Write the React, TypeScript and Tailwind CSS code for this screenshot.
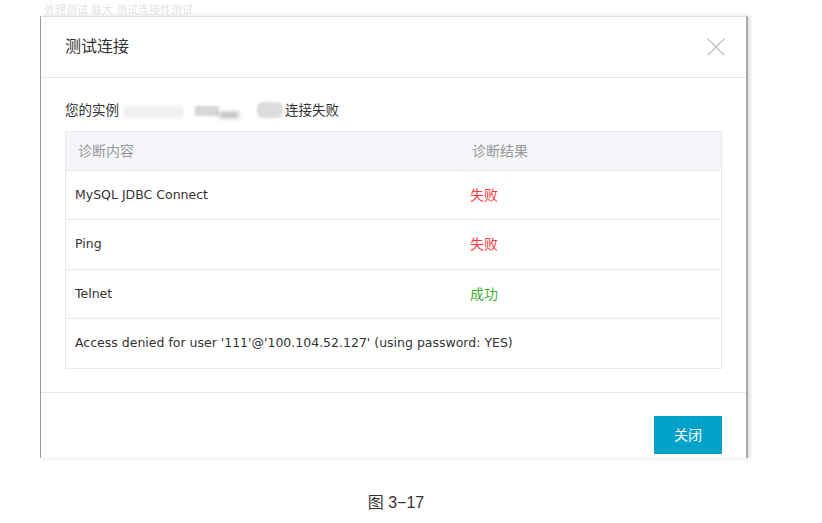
import { X } from "lucide-react";

const rows = [
  { name: "MySQL JDBC Connect", result: "失败", ok: false, h: "h-[49px]" },
  { name: "Ping", result: "失败", ok: false, h: "h-[50px]" },
  { name: "Telnet", result: "成功", ok: true, h: "h-[49px]" },
];

const font = "font-['Liberation_Sans','Noto_Sans_CJK_SC',sans-serif]";
const latin = "font-['DejaVu_Sans','Noto_Sans_CJK_SC',sans-serif] text-[12.5px]";

const App = () => {
  return (
    <div className={`w-[822px] h-[523px] bg-white ${font} text-[#333] overflow-hidden`}>
      <div className="h-[16px] pl-[44px] text-[11px] leading-[20px] text-[#e2e2e2] blur-[0.7px] overflow-hidden">
        处理测试 最大 测试连接性测试
      </div>
      <div className="pl-[40px]">
        <div className="w-[708px] h-[442px] overflow-hidden border-l border-t border-r-2 border-[#999] border-t-[#ddd] border-r-[#aaa] bg-white shadow-[2px_0_4px_rgba(0,0,0,0.15)]">
          <div className="h-[61px] flex items-center justify-between pl-[24px] pr-[14px] border-b border-[#e6e6e6]">
            <span className="text-[16px]">测试连接</span>
            <X className="w-[32px] h-[32px] text-[#c4c4c4]" strokeWidth={1.1} />
          </div>
          <div className="px-[24px] pt-[24px] pb-[23px] border-b border-[#e6e6e6]">
            <div className="flex items-center h-[18px] text-[13.5px] mb-[11px]">
              <span>您的实例</span>
              <span className="relative w-[166px] h-[18px]">
                <span className="absolute left-[4px] top-[4px] w-[60px] h-[12px] bg-[#efefef] blur-[2px]" />
                <span className="absolute left-[76px] top-[4px] w-[24px] h-[10px] bg-[#d6d6d6] blur-[1px]" />
                <span className="absolute left-[100px] top-[10px] w-[20px] h-[6px] bg-[#bbb] blur-[2px]" />
                <span className="absolute left-[138px] top-[0px] w-[26px] h-[16px] rounded-[6px] bg-[#dcdcdc] blur-[1px]" />
              </span>
              <span>连接失败</span>
            </div>
            <div className="border border-[#e8eaef] text-[13px]">
              <div className="flex h-[38px] items-center bg-[#f5f6fa] text-[#999] text-[14px]">
                <div className="w-[395px] pl-[12px]">诊断内容</div>
                <div className="pl-[11px]">诊断结果</div>
              </div>
              {rows.map((r) => (
                <div key={r.name} className={`flex ${r.h} items-center border-t border-[#e8eaef]`}>
                  <div className={`w-[395px] pl-[9px] ${latin}`}>{r.name}</div>
                  <div className={`pl-[9px] text-[14px] ${r.ok ? "text-[#3cb034]" : "text-[#ff3b3b]"}`}>{r.result}</div>
                </div>
              ))}
              <div className={`flex h-[50px] items-center border-t border-[#e8eaef] pl-[9px] ${latin}`}>
                Access denied for user '111'@'100.104.52.127' (using password: YES)
              </div>
            </div>
          </div>
          <div className="flex justify-end pr-[24px] pt-[23px]">
            <button className="w-[68px] h-[38px] bg-[#00a2ca] text-white text-[14px]">关闭</button>
          </div>
        </div>
      </div>
      <div className="pt-[33px] text-center text-[16px] text-[#333] pr-[30px]">图 3−17</div>
    </div>
  );
};

export default App;
